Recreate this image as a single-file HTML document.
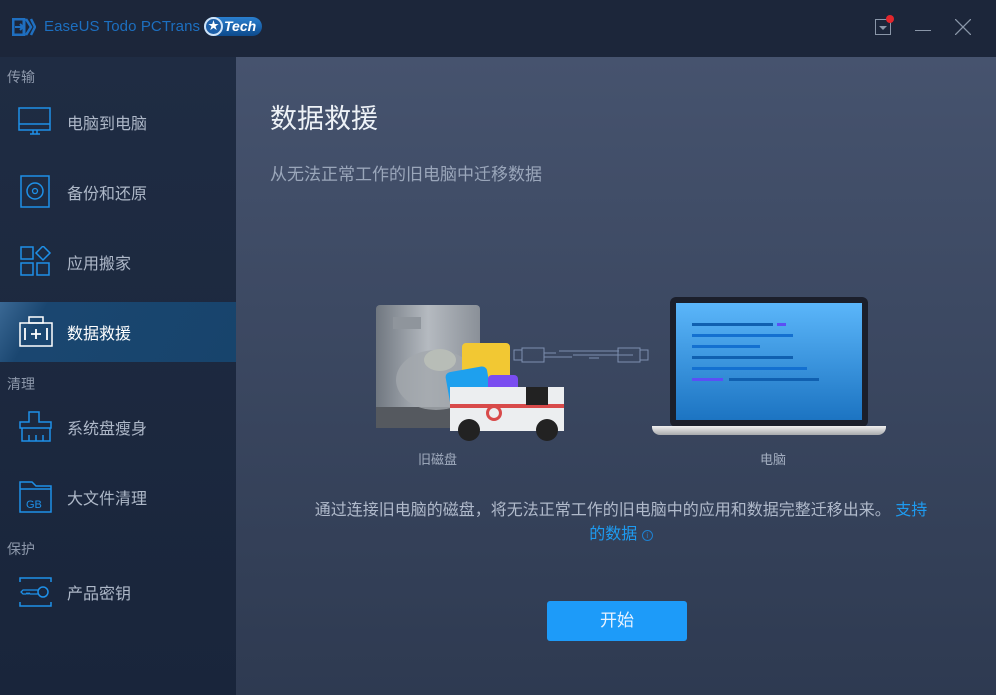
<!DOCTYPE html>
<html><head><meta charset="utf-8"><style>
*{margin:0;padding:0;box-sizing:border-box}
body{width:996px;height:695px;overflow:hidden;font-family:"Liberation Sans","Noto Sans CJK SC",sans-serif;background:#1c263a;position:relative}
.top{position:absolute;left:0;top:0;width:996px;height:57px;background:#1c263a}
.side{position:absolute;left:0;top:57px;width:236px;height:638px;background:linear-gradient(#1f2c43,#19253b)}
.main{position:absolute;left:236px;top:57px;width:760px;height:638px;background:linear-gradient(#46536e,#2e3a51)}
.sec{position:absolute;left:7px;font-size:14px;color:#8d98ab}
.item{position:absolute;left:0;width:236px;height:60px;font-size:16px;color:#aeb8c8}
.item span{position:absolute;left:67px;top:50%;transform:translateY(-50%)}
.item svg{position:absolute;left:18px;top:50%;transform:translateY(-50%)}
.act{background:linear-gradient(120deg,#3a6894 0,#1a4670 18%,#17446c);color:#fff}
.t{position:absolute;color:#a3aec0}
</style></head><body>
<div class="top">
<svg style="position:absolute;left:12px;top:18px" width="24" height="18" viewBox="0 0 24 18"><path d="M1 1h11l0 16H1z" fill="none" stroke="#1f6fc0" stroke-width="3"/><path d="M3 9h8M8 6l3 3-3 3" stroke="#1f6fc0" stroke-width="2" fill="none"/><path d="M14 1l5 8-5 8M19 1l4 8-4 8" stroke="#1f6fc0" stroke-width="2.5" fill="none"/></svg>
<div style="position:absolute;left:44px;top:18px;font-size:15px;color:#1c6fc0;letter-spacing:0.1px">EaseUS Todo PCTrans</div>
<div style="position:absolute;left:204px;top:17px;width:58px;height:19px;border-radius:10px;background:linear-gradient(#2a7fcf,#0d4a8c)"></div>
<div style="position:absolute;left:204px;top:17px;width:19px;height:19px;border-radius:50%;background:#1d5fa8;border:2px solid #cfe3f7;color:#fff;font-size:11px;text-align:center;line-height:15px">★</div>
<div style="position:absolute;left:224px;top:18px;font-size:14px;font-weight:bold;font-style:italic;color:#fff">Tech</div>
<div style="position:absolute;left:875px;top:19px;width:16px;height:16px;border:1px solid #8a96a8"></div>
<div style="position:absolute;left:879px;top:26px;width:0;height:0;border-left:4px solid transparent;border-right:4px solid transparent;border-top:4px solid #8a96a8"></div>
<div style="position:absolute;left:886px;top:15px;width:8px;height:8px;border-radius:50%;background:#e3262c"></div>
<div style="position:absolute;left:915px;top:30px;width:16px;height:1px;background:#8a96a8"></div>
<svg style="position:absolute;left:955px;top:19px" width="16" height="16"><path d="M0 0L16 16M16 0L0 16" stroke="#8a96a8" stroke-width="1.3"/></svg>
</div>
<div class="side">
<div class="sec" style="top:10px">传输</div>
<div class="item" style="top:35px"><svg width="34" height="30"><rect x="1" y="1" width="31" height="22" fill="none" stroke="#1e90e8" stroke-width="1.5"/><path d="M1 17h31M12 27h10M15 23v4M19 23v4" stroke="#1e90e8" stroke-width="1.5"/></svg><span>电脑到电脑</span></div>
<div class="item" style="top:105px"><svg width="34" height="34" style="left:20px"><rect x="1" y="1" width="28" height="31" fill="none" stroke="#1e90e8" stroke-width="1.5"/><circle cx="15" cy="16" r="8" fill="none" stroke="#1e90e8" stroke-width="1.5"/><circle cx="15" cy="16" r="2.5" fill="none" stroke="#1e90e8" stroke-width="1.3"/></svg><span>备份和还原</span></div>
<div class="item" style="top:175px"><svg width="34" height="32" style="left:20px"><rect x="1" y="1" width="12" height="12" fill="none" stroke="#1e90e8" stroke-width="1.5"/><path d="M23 0l7 7-7 7-7-7z" fill="none" stroke="#1e90e8" stroke-width="1.5"/><rect x="1" y="17" width="12" height="12" fill="none" stroke="#1e90e8" stroke-width="1.5"/><rect x="17" y="17" width="12" height="12" fill="none" stroke="#1e90e8" stroke-width="1.5"/></svg><span>应用搬家</span></div>
<div class="item act" style="top:245px"><svg width="34" height="32" style="left:19px"><rect x="1" y="7" width="32" height="23" fill="none" stroke="#fff" stroke-width="1.5"/><rect x="10" y="1" width="14" height="6" fill="none" stroke="#fff" stroke-width="1.5"/><path d="M6 12v12M28 12v12M12 18h10M17 13v10" stroke="#fff" stroke-width="1.8"/></svg><span>数据救援</span></div>
<div class="sec" style="top:317px">清理</div>
<div class="item" style="top:340px"><svg width="34" height="32" style="left:19px"><path d="M10 1h10v10h12v6H1v-6h9z M3 17v13h28V17 M10 24v6M17 24v6M24 24v6" fill="none" stroke="#1e90e8" stroke-width="1.5"/></svg><span>系统盘瘦身</span></div>
<div class="item" style="top:410px"><svg width="34" height="32" style="left:19px"><path d="M1 1h12l4 4h15v26H1z M1 8h31" fill="none" stroke="#1e90e8" stroke-width="1.5"/><text x="7" y="27" font-size="11" fill="#1e90e8" font-family="Liberation Sans">GB</text></svg><span>大文件清理</span></div>
<div class="sec" style="top:482px">保护</div>
<div class="item" style="top:505px"><svg width="34" height="30" style="left:19px"><path d="M1 5V1h31v4M1 25v4h31v-4" fill="none" stroke="#1e90e8" stroke-width="1.5"/><circle cx="24" cy="15" r="5" fill="none" stroke="#1e90e8" stroke-width="1.5"/><path d="M19 13H4l-2 2 2 2h3l1-1 1 1 1-1 1 1h8" fill="none" stroke="#1e90e8" stroke-width="1.3"/></svg><span>产品密钥</span></div>
</div>
<div class="main">
<div style="position:absolute;left:34px;top:40px;font-size:27px;color:#eef2f7">数据救援</div>
<div class="t" style="left:34px;top:103px;font-size:17px;color:#9aa6ba">从无法正常工作的旧电脑中迁移数据</div>
<div style="position:absolute;left:140px;top:248px;width:104px;height:123px;border-radius:4px;background:linear-gradient(90deg,#707780,#b5bac0 50%,#8a9098)"></div>
<div style="position:absolute;left:140px;top:350px;width:104px;height:21px;background:#55595f"></div>
<div style="position:absolute;left:157px;top:260px;width:28px;height:12px;background:#8f959c"></div>
<div style="position:absolute;left:160px;top:293px;width:80px;height:60px;border-radius:50%;background:#a2a7ad;opacity:.8"></div>
<div style="position:absolute;left:188px;top:292px;width:32px;height:22px;border-radius:50%;background:#b8bdb7"></div>
<div style="position:absolute;left:226px;top:286px;width:48px;height:50px;border-radius:4px;background:#f2c833"></div>
<div style="position:absolute;left:212px;top:312px;width:42px;height:40px;border-radius:5px;background:#1ea0ee;transform:rotate(-10deg)"></div>
<div style="position:absolute;left:252px;top:318px;width:30px;height:32px;border-radius:4px;background:#7a4df0"></div>
<div style="position:absolute;left:214px;top:330px;width:114px;height:44px;background:#eceef0"></div>
<div style="position:absolute;left:214px;top:347px;width:114px;height:4px;background:#d84a4a"></div>
<div style="position:absolute;left:290px;top:330px;width:22px;height:18px;background:#222"></div>
<div style="position:absolute;left:250px;top:348px;width:16px;height:16px;border-radius:50%;border:3px solid #d84a4a"></div>
<div style="position:absolute;left:222px;top:362px;width:22px;height:22px;border-radius:50%;background:#222"></div>
<div style="position:absolute;left:300px;top:362px;width:22px;height:22px;border-radius:50%;background:#222"></div>
<svg style="position:absolute;left:277px;top:290px" width="145" height="20"><g fill="none" stroke="#7d8fb0" stroke-width="1"><rect x="1" y="3" width="8" height="10"/><rect x="9" y="1" width="22" height="14"/><path d="M31 6h12M31 10h28M46 4h60M60 8h60M76 11h10"/><rect x="105" y="1" width="22" height="14"/><rect x="127" y="3" width="8" height="10"/></g></svg>
<div style="position:absolute;left:434px;top:240px;width:198px;height:130px;border-radius:6px;background:#1b1f2b"></div>
<div style="position:absolute;left:440px;top:246px;width:186px;height:117px;background:linear-gradient(#5bb6fa,#1c74c2)"></div>
<div style="position:absolute;left:456px;top:266px;width:81px;height:3px;background:#1060b0"></div>
<div style="position:absolute;left:541px;top:266px;width:9px;height:3px;background:#5b4ff5"></div>
<div style="position:absolute;left:456px;top:277px;width:101px;height:3px;background:#1470d0"></div>
<div style="position:absolute;left:456px;top:288px;width:68px;height:3px;background:#1470d0"></div>
<div style="position:absolute;left:456px;top:299px;width:101px;height:3px;background:#1060b0"></div>
<div style="position:absolute;left:456px;top:310px;width:115px;height:3px;background:#1470d0"></div>
<div style="position:absolute;left:456px;top:321px;width:31px;height:3px;background:#5b4ff5"></div>
<div style="position:absolute;left:493px;top:321px;width:90px;height:3px;background:#1060b0"></div>
<div style="position:absolute;left:416px;top:369px;width:234px;height:9px;border-radius:0 0 8px 8px;background:linear-gradient(#f0f0f0,#a8aaad)"></div>
<div class="t" style="left:182px;top:392px;font-size:13px">旧磁盘</div>
<div class="t" style="left:524px;top:392px;font-size:13px">电脑</div>
<div class="t" style="left:40px;top:442px;font-size:16px;color:#b0bacb;width:690px;line-height:24px;text-align:center">通过连接旧电脑的磁盘，将无法正常工作的旧电脑中的应用和数据完整迁移出来。 <span style="color:#1e9bf0">支持<br>的数据</span> <span style="display:inline-block;width:11px;height:11px;border:1px solid #1e80d0;border-radius:50%;font-size:8px;line-height:9px;color:#1e80d0;vertical-align:1px;text-align:center">i</span></div>
<div style="position:absolute;left:311px;top:544px;width:140px;height:40px;border-radius:3px;background:#1d9bf9;color:#e6f2ff;font-size:17px;text-align:center;line-height:40px">开始</div>
</div>
</body></html>
